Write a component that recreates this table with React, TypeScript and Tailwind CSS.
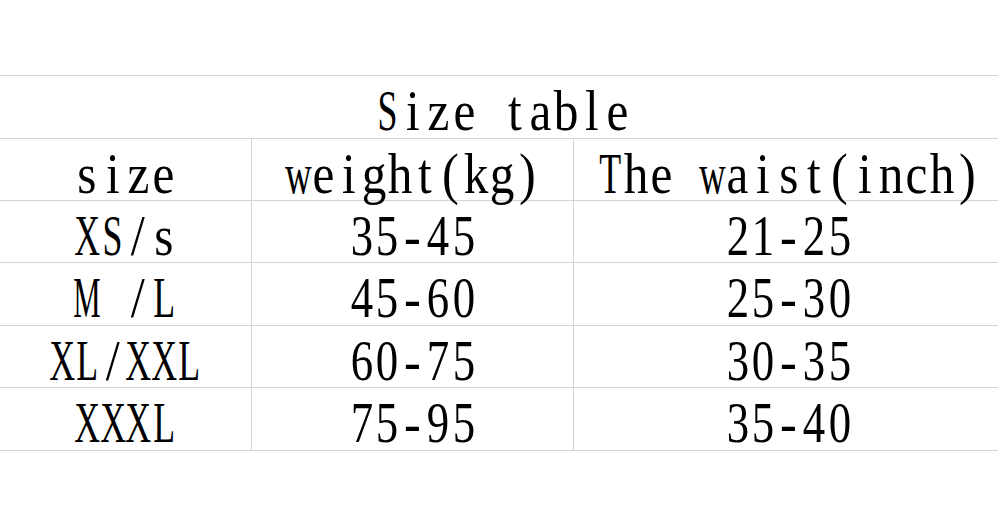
import React from "react";

const rows = [
  ["XS/s", "35-45", "21-25", "h-[62px]"],
  ["M /L", "45-60", "25-30", "h-[63px]"],
  ["XL/XXL", "60-75", "30-35", "h-[62px]"],
  ["XXXL", "75-95", "35-40", "h-[63px]"],
];

function cls(c: string) {
  if (c === "M" || c === "m") return "scale-x-[0.55]";
  if (c === "w") return "scale-x-[0.66]";
  if (/[A-Z]/.test(c)) return "scale-x-[0.64]";
  if (/[0-9]/.test(c)) return "scale-x-[0.8]";
  if (/[a-z]/.test(c)) return "scale-x-[0.88]";
  return "scale-x-[0.9]";
}

function T({ children }: { children: string }) {
  return (
    <span className="inline-flex translate-y-[4px] leading-none whitespace-pre">
      {children.split("").map((c, i) => (
        <span key={i} className="inline-flex w-[25.5px] justify-center">
          <span className={`inline-block ${cls(c)}`}>{c === " " ? "\u00a0" : c}</span>
        </span>
      ))}
    </span>
  );
}

export default function App() {
  return (
    <div
      className="w-[1000px] h-[519px] bg-white text-black overflow-hidden"
      style={{ fontFamily: '"Liberation Serif", serif' }}
    >
      <div className="mt-[75px] w-[998px] border-t border-[#d4d4d4] text-[56px]">
        <div className="h-[63px] border-b border-[#d4d4d4] flex items-center justify-center pl-[7px]">
          <T>Size table</T>
        </div>
        <div className="grid grid-cols-[252px_322px_1fr] h-[62px] border-b border-[#d4d4d4]">
          <div className="border-r border-[#d4d4d4] flex items-center justify-center">
            <T>size</T>
          </div>
          <div className="border-r border-[#d4d4d4] flex items-center justify-center">
            <T>weight(kg)</T>
          </div>
          <div className="flex items-center justify-center pl-[5px]">
            <T>The waist(inch)</T>
          </div>
        </div>
        {rows.map((r) => (
          <div
            key={r[0]}
            className={`grid grid-cols-[252px_322px_1fr] border-b border-[#d4d4d4] ${r[3]}`}
          >
            <div className="border-r border-[#d4d4d4] flex items-center justify-center">
              <T>{r[0]}</T>
            </div>
            <div className="border-r border-[#d4d4d4] flex items-center justify-center">
              <T>{r[1]}</T>
            </div>
            <div className="flex items-center justify-center pl-[5px]">
              <T>{r[2]}</T>
            </div>
          </div>
        ))}
      </div>
    </div>
  );
}
